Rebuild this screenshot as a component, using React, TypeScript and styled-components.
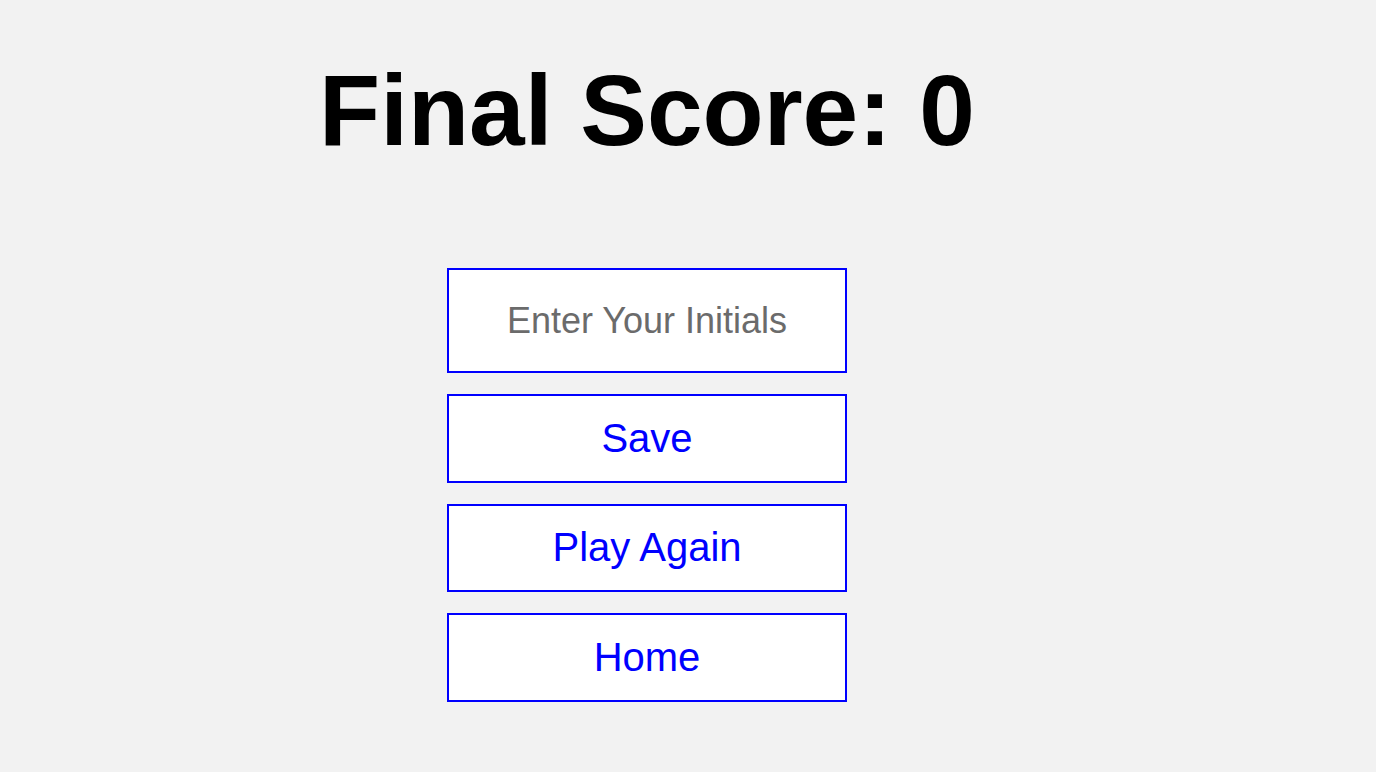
import React from "react";
import styled, { createGlobalStyle } from "styled-components";

const GlobalStyle = createGlobalStyle`
  html, body {
    margin: 0;
    padding: 0;
    background: #f2f2f2;
    font-family: "Liberation Sans", Arial, sans-serif;
  }
`;

const Page = styled.main`
  display: flex;
  flex-direction: column;
  align-items: center;
  padding-right: 82px;
  min-height: 772px;
  box-sizing: border-box;
`;

const Title = styled.h1`
  margin: 53px 0 100px;
  font-size: 100px;
  line-height: 115px;
  font-weight: 700;
  color: #000;
`;

const Form = styled.div`
  display: flex;
  flex-direction: column;
  gap: 21px;
  width: 400px;
`;

const InitialsInput = styled.input`
  box-sizing: border-box;
  width: 400px;
  height: 105px;
  border: 2px solid #0000ff;
  background: #fff;
  font-family: "Liberation Sans", Arial, sans-serif;
  font-size: 36px;
  text-align: center;
  color: #000;
  outline: none;
  padding: 0;
  &::placeholder {
    color: #6b6b6b;
  }
`;

const ActionButton = styled.button`
  box-sizing: border-box;
  width: 400px;
  height: 88.5px;
  border: 2px solid #0000ff;
  background: #fff;
  color: #0000ff;
  font-family: "Liberation Sans", Arial, sans-serif;
  font-size: 40px;
  padding: 0;
  cursor: pointer;
`;

export default function App() {
  return (
    <>
      <GlobalStyle />
      <Page>
        <Title>Final Score: 0</Title>
        <Form>
          <InitialsInput placeholder="Enter Your Initials" />
          <ActionButton>Save</ActionButton>
          <ActionButton>Play Again</ActionButton>
          <ActionButton>Home</ActionButton>
        </Form>
      </Page>
    </>
  );
}
